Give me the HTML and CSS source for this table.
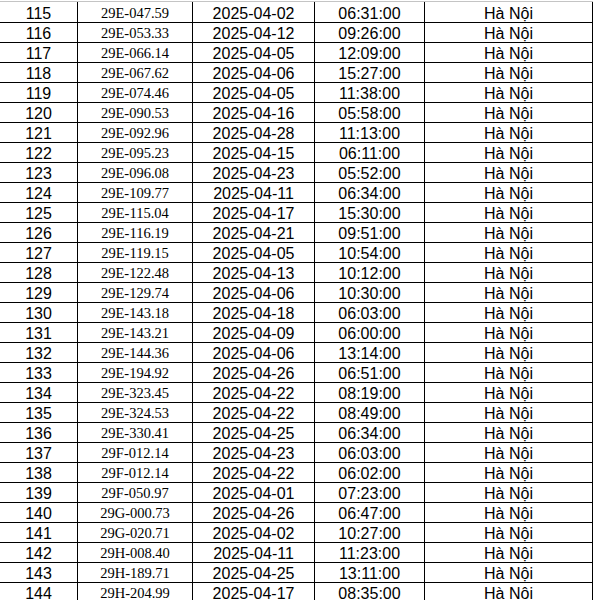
FILE: index.html
```html
<!DOCTYPE html>
<html lang="vi">
<head>
<meta charset="utf-8">
<title>Danh sách</title>
<link rel="stylesheet" href="styles.css">
</head>
<body>
<div class="sheet">
  <div class="row"><div class="c num">115</div><div class="c plate">29E-047.59</div><div class="c date">2025-04-02</div><div class="c time">06:31:00</div><div class="c place">Hà Nội</div></div>
  <div class="row"><div class="c num">116</div><div class="c plate">29E-053.33</div><div class="c date">2025-04-12</div><div class="c time">09:26:00</div><div class="c place">Hà Nội</div></div>
  <div class="row"><div class="c num">117</div><div class="c plate">29E-066.14</div><div class="c date">2025-04-05</div><div class="c time">12:09:00</div><div class="c place">Hà Nội</div></div>
  <div class="row"><div class="c num">118</div><div class="c plate">29E-067.62</div><div class="c date">2025-04-06</div><div class="c time">15:27:00</div><div class="c place">Hà Nội</div></div>
  <div class="row"><div class="c num">119</div><div class="c plate">29E-074.46</div><div class="c date">2025-04-05</div><div class="c time">11:38:00</div><div class="c place">Hà Nội</div></div>
  <div class="row"><div class="c num">120</div><div class="c plate">29E-090.53</div><div class="c date">2025-04-16</div><div class="c time">05:58:00</div><div class="c place">Hà Nội</div></div>
  <div class="row"><div class="c num">121</div><div class="c plate">29E-092.96</div><div class="c date">2025-04-28</div><div class="c time">11:13:00</div><div class="c place">Hà Nội</div></div>
  <div class="row"><div class="c num">122</div><div class="c plate">29E-095.23</div><div class="c date">2025-04-15</div><div class="c time">06:11:00</div><div class="c place">Hà Nội</div></div>
  <div class="row"><div class="c num">123</div><div class="c plate">29E-096.08</div><div class="c date">2025-04-23</div><div class="c time">05:52:00</div><div class="c place">Hà Nội</div></div>
  <div class="row"><div class="c num">124</div><div class="c plate">29E-109.77</div><div class="c date">2025-04-11</div><div class="c time">06:34:00</div><div class="c place">Hà Nội</div></div>
  <div class="row"><div class="c num">125</div><div class="c plate">29E-115.04</div><div class="c date">2025-04-17</div><div class="c time">15:30:00</div><div class="c place">Hà Nội</div></div>
  <div class="row"><div class="c num">126</div><div class="c plate">29E-116.19</div><div class="c date">2025-04-21</div><div class="c time">09:51:00</div><div class="c place">Hà Nội</div></div>
  <div class="row"><div class="c num">127</div><div class="c plate">29E-119.15</div><div class="c date">2025-04-05</div><div class="c time">10:54:00</div><div class="c place">Hà Nội</div></div>
  <div class="row"><div class="c num">128</div><div class="c plate">29E-122.48</div><div class="c date">2025-04-13</div><div class="c time">10:12:00</div><div class="c place">Hà Nội</div></div>
  <div class="row"><div class="c num">129</div><div class="c plate">29E-129.74</div><div class="c date">2025-04-06</div><div class="c time">10:30:00</div><div class="c place">Hà Nội</div></div>
  <div class="row"><div class="c num">130</div><div class="c plate">29E-143.18</div><div class="c date">2025-04-18</div><div class="c time">06:03:00</div><div class="c place">Hà Nội</div></div>
  <div class="row"><div class="c num">131</div><div class="c plate">29E-143.21</div><div class="c date">2025-04-09</div><div class="c time">06:00:00</div><div class="c place">Hà Nội</div></div>
  <div class="row"><div class="c num">132</div><div class="c plate">29E-144.36</div><div class="c date">2025-04-06</div><div class="c time">13:14:00</div><div class="c place">Hà Nội</div></div>
  <div class="row"><div class="c num">133</div><div class="c plate">29E-194.92</div><div class="c date">2025-04-26</div><div class="c time">06:51:00</div><div class="c place">Hà Nội</div></div>
  <div class="row"><div class="c num">134</div><div class="c plate">29E-323.45</div><div class="c date">2025-04-22</div><div class="c time">08:19:00</div><div class="c place">Hà Nội</div></div>
  <div class="row"><div class="c num">135</div><div class="c plate">29E-324.53</div><div class="c date">2025-04-22</div><div class="c time">08:49:00</div><div class="c place">Hà Nội</div></div>
  <div class="row"><div class="c num">136</div><div class="c plate">29E-330.41</div><div class="c date">2025-04-25</div><div class="c time">06:34:00</div><div class="c place">Hà Nội</div></div>
  <div class="row"><div class="c num">137</div><div class="c plate">29F-012.14</div><div class="c date">2025-04-23</div><div class="c time">06:03:00</div><div class="c place">Hà Nội</div></div>
  <div class="row"><div class="c num">138</div><div class="c plate">29F-012.14</div><div class="c date">2025-04-22</div><div class="c time">06:02:00</div><div class="c place">Hà Nội</div></div>
  <div class="row"><div class="c num">139</div><div class="c plate">29F-050.97</div><div class="c date">2025-04-01</div><div class="c time">07:23:00</div><div class="c place">Hà Nội</div></div>
  <div class="row"><div class="c num">140</div><div class="c plate">29G-000.73</div><div class="c date">2025-04-26</div><div class="c time">06:47:00</div><div class="c place">Hà Nội</div></div>
  <div class="row"><div class="c num">141</div><div class="c plate">29G-020.71</div><div class="c date">2025-04-02</div><div class="c time">10:27:00</div><div class="c place">Hà Nội</div></div>
  <div class="row"><div class="c num">142</div><div class="c plate">29H-008.40</div><div class="c date">2025-04-11</div><div class="c time">11:23:00</div><div class="c place">Hà Nội</div></div>
  <div class="row"><div class="c num">143</div><div class="c plate">29H-189.71</div><div class="c date">2025-04-25</div><div class="c time">13:11:00</div><div class="c place">Hà Nội</div></div>
  <div class="row"><div class="c num">144</div><div class="c plate">29H-204.99</div><div class="c date">2025-04-17</div><div class="c time">08:35:00</div><div class="c place">Hà Nội</div></div>
</div>
</body>
</html>
```
FILE: styles.css
```css
html, body {
  margin: 0;
  padding: 0;
  background: #ffffff;
}
body {
  padding-top: 1px;
  overflow: hidden;
}
.sheet {
  width: 593px;
  border-top: 1px solid #c4c4c4;
  font-family: "Liberation Sans", Arial, sans-serif;
  font-size: 16px;
  color: #000;
}
.row {
  display: grid;
  grid-template-columns: 78px 115px 122px 110px 168px;
  height: 20px;
  box-sizing: border-box;
  border-bottom: 1px solid #000;
  align-items: start;
}
.row:first-child {
  height: 21px;
}
.c {
  box-sizing: border-box;
  height: 100%;
  border-right: 1px solid #000;
  text-align: center;
  padding-top: 2px;
  line-height: 17px;
  white-space: nowrap;
  overflow: visible;
}
.row:first-child .c {
  padding-top: 3px;
}
.plate {
  font-family: "Liberation Serif", "Times New Roman", serif;
  font-size: 14.5px;
}
```
